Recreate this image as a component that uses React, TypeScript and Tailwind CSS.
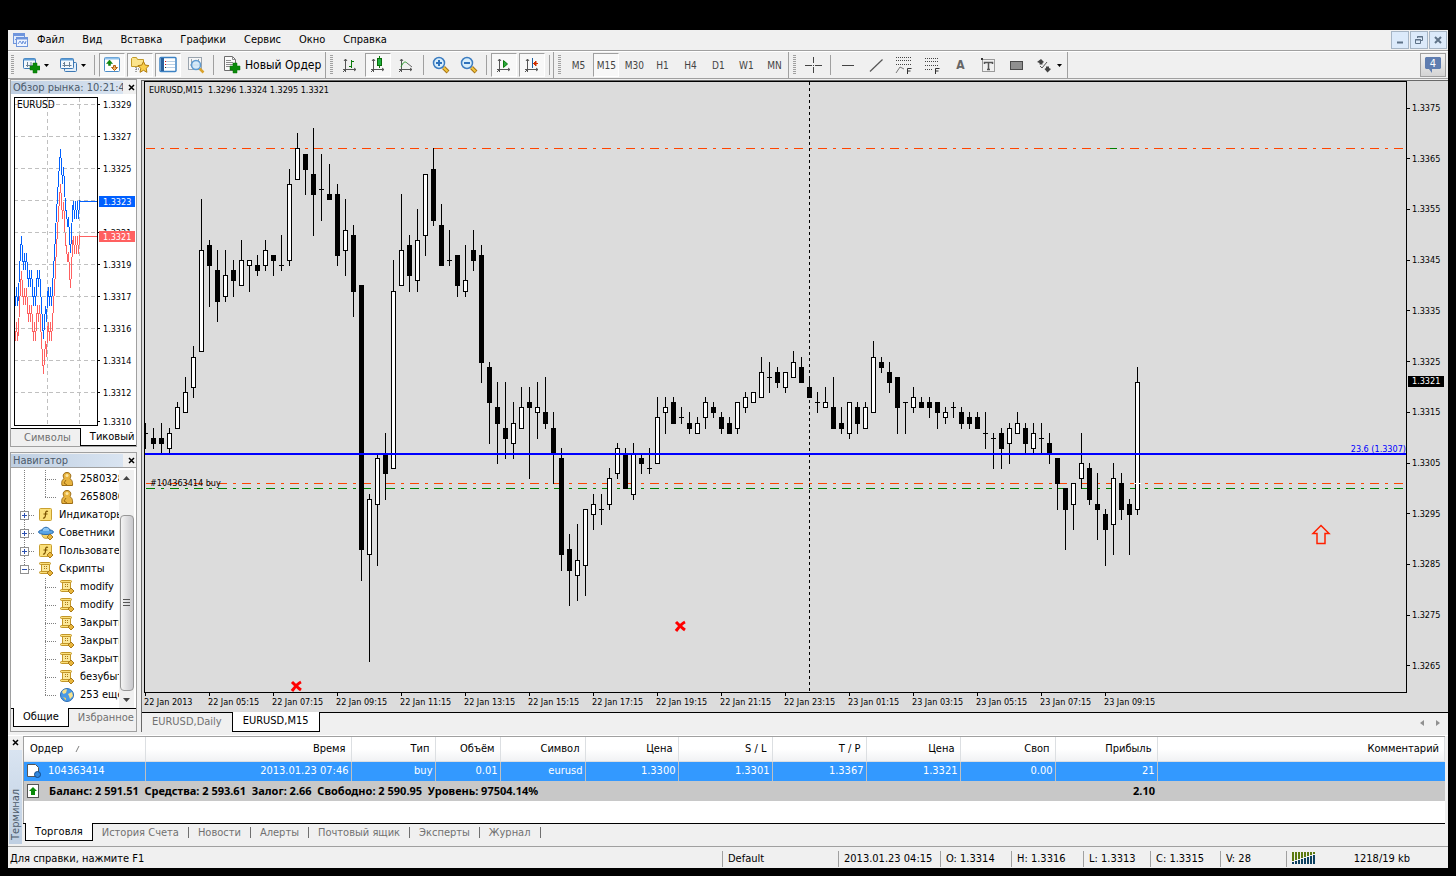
import type { ReactNode } from "react";
import { clsx } from "clsx";

type Candle = [open: number, high: number, low: number, close: number];

// M15 bars, in points above 1.3200
const CANDLES: Candle[] = [
  [111, 113, 108, 111], [110, 112, 108, 109], [110, 113, 107, 109], [108, 112, 107, 111],
  [112, 117, 112, 116], [115, 122, 115, 119], [120, 128, 118, 126], [127, 157, 127, 147],
  [148, 149, 136, 144], [143, 147, 133, 137], [138, 147, 137, 142], [143, 145, 138, 141],
  [140, 149, 140, 145], [144, 145, 139, 145], [144, 146, 142, 143], [144, 149, 143, 147],
  [146, 146, 142, 145], [144, 150, 143, 144], [145, 163, 144, 160], [161, 170, 161, 167],
  [166, 166, 158, 163], [162, 171, 150, 158], [159, 166, 153, 159], [158, 164, 157, 157],
  [158, 160, 144, 146], [147, 157, 142, 151], [150, 152, 134, 139], [140, 140, 82, 88],
  [87, 99, 66, 98], [97, 107, 85, 106], [107, 111, 98, 103], [104, 145, 104, 139],
  [140, 158, 140, 147], [148, 150, 139, 142], [141, 155, 139, 149], [150, 162, 146, 162],
  [163, 167, 152, 153], [152, 156, 144, 144], [145, 151, 144, 145], [146, 146, 138, 140],
  [139, 148, 138, 141], [147, 151, 143, 145], [146, 148, 121, 125], [124, 125, 109, 117],
  [116, 121, 105, 113], [112, 121, 106, 110], [109, 117, 106, 113], [112, 120, 112, 116],
  [117, 120, 102, 116], [115, 121, 110, 116], [115, 122, 112, 113], [112, 115, 101, 107],
  [106, 108, 84, 87], [88, 91, 77, 84], [83, 93, 78, 86], [85, 96, 79, 96],
  [95, 99, 92, 97], [96, 99, 93, 96], [97, 104, 96, 102], [103, 109, 102, 108],
  [107, 108, 100, 100], [99, 109, 98, 107], [106, 107, 103, 105], [104, 108, 103, 104],
  [105, 118, 105, 114], [115, 118, 111, 116], [117, 118, 113, 113], [114, 116, 113, 114],
  [113, 115, 111, 112], [111, 114, 111, 113], [114, 118, 112, 117], [116, 117, 114, 115],
  [114, 115, 111, 112], [113, 114, 111, 111], [112, 117, 111, 117], [116, 119, 115, 118],
  [117, 119, 117, 119], [118, 126, 118, 123], [122, 125, 119, 122], [123, 124, 120, 121],
  [120, 123, 119, 123], [122, 127, 122, 125], [124, 126, 121, 121], [120, 122, 118, 118],
  [117, 119, 115, 117], [116, 120, 116, 117], [116, 122, 112, 112], [113, 116, 111, 112],
  [111, 117, 110, 117], [116, 117, 111, 113], [112, 117, 112, 116], [115, 129, 115, 126],
  [125, 126, 123, 124], [123, 125, 119, 121], [122, 122, 111, 116], [117, 117, 111, 117],
  [116, 120, 115, 118], [117, 118, 116, 116], [117, 118, 114, 116], [117, 117, 112, 115],
  [114, 116, 113, 115], [116, 117, 114, 116], [115, 116, 112, 113], [114, 115, 112, 113],
  [114, 115, 112, 112], [111, 115, 108, 111], [110, 111, 104, 110], [111, 112, 104, 108],
  [109, 113, 105, 112], [111, 115, 111, 113], [112, 113, 107, 109], [108, 113, 107, 111],
  [110, 113, 107, 110], [109, 111, 105, 107], [106, 106, 96, 101], [100, 100, 88, 96],
  [97, 101, 92, 101], [102, 111, 100, 105], [104, 105, 97, 98], [97, 103, 90, 96],
  [95, 96, 85, 92], [93, 105, 87, 102], [101, 103, 94, 96], [97, 98, 87, 95],
  [96, 124, 95, 121],
];

const PRICES = [
  "1.3375", "1.3365", "1.3355", "1.3345", "1.3335", "1.3325",
  "1.3315", "1.3305", "1.3295", "1.3285", "1.3275", "1.3265",
];

const TIMES = [
  "22 Jan 2013", "22 Jan 05:15", "22 Jan 07:15", "22 Jan 09:15", "22 Jan 11:15", "22 Jan 13:15",
  "22 Jan 15:15", "22 Jan 17:15", "22 Jan 19:15", "22 Jan 21:15", "22 Jan 23:15", "23 Jan 01:15",
  "23 Jan 03:15", "23 Jan 05:15", "23 Jan 07:15", "23 Jan 09:15",
];

// ask line, one value per pixel column
const TICKS = [
  133, 114, 133, 123, 97, 80, 63, 80, 97, 80, 97, 80, 97, 114, 97, 114, 97, 114, 133, 114, 133, 114,
  97, 114, 97, 114, 133, 149, 166, 149, 133, 149, 123, 114, 133, 114, 133, 114, 97, 80, 63, 37, 26, 3,
  -7, -24, -7, 11, -6, 11, 37, 37, 54, 44, 63, 80, 63, 37, 28, 46, 28, 46, 28, 46, 28,
];

const TICK_LABELS: [number, string][] = [
  [7, "1.3329"], [39, "1.3327"], [71, "1.3325"], [135, "1.3321"], [167, "1.3319"],
  [199, "1.3317"], [231, "1.3316"], [263, "1.3314"], [295, "1.3312"], [324, "1.3310"],
];

const priceY = (point: number) => Math.round(25.86 + 5.075 * (175 - point));

/* ---------- icons ---------- */

function Icon({ children, size = 18 }: { children: ReactNode; size?: number }) {
  return (
    <svg width={size} height={size} viewBox={`0 0 ${size} ${size}`} fill="none" className="shrink-0" aria-hidden="true">
      {children}
    </svg>
  );
}

function Caret() {
  return (
    <svg width="5" height="3" viewBox="0 0 5 3" className="shrink-0" aria-hidden="true">
      <path d="M0 0h5L2.5 3z" fill="#000" />
    </svg>
  );
}

const GreenPlus = ({ x, y }: { x: number; y: number }) => (
  <path d={`M${x + 3} ${y}h4v3h3v4h-3v3h-4v-3h-3v-4h3z`} fill="#0a8a0a" stroke="#067006" strokeWidth="0.5" />
);

const AppIcon = () => (
  <Icon size={16}>
    <rect x="1.5" y="1.5" width="11" height="10" fill="#dfeafc" stroke="#6f95dc" />
    <path d="M1 3h12" stroke="#6f95dc" strokeWidth="2" />
    <path d="M3 8l2-2 1 2 2-3" stroke="#6f95dc" />
    <rect x="4.5" y="5.5" width="11" height="9" fill="#eff5ff" stroke="#6f95dc" />
    <path d="M4 6.5h12" stroke="#6f95dc" strokeWidth="2" />
    <path d="M6 12l2-3 2 3 1-3 2 3 1-3" stroke="#6f95dc" />
  </Icon>
);

const NewChartIcon = () => (
  <Icon>
    <rect x="1.5" y="2.5" width="12" height="10" rx="1" fill="#f2f8fd" stroke="#3c78b4" />
    <path d="M2 3.5h11" stroke="#5f9fd8" strokeWidth="2" />
    <path d="M4 9.5h7M5.5 6v5M9 6v4" stroke="#6c8296" />
    <GreenPlus x={8} y={7} />
  </Icon>
);

const ProfilesIcon = () => (
  <Icon>
    <rect x="5.5" y="6.5" width="12" height="9" rx="1" fill="#e3eef8" stroke="#3c78b4" />
    <rect x="1.5" y="2.5" width="13" height="10" rx="1" fill="#f2f8fd" stroke="#3c78b4" />
    <path d="M2 3.5h12" stroke="#5f9fd8" strokeWidth="2" />
    <path d="M3.5 9.5h9M5.5 6v5M4 7.5h2M10.5 6v5" stroke="#6c8296" />
  </Icon>
);

const MarketWatchIcon = () => (
  <Icon>
    <rect x="1.5" y="1.5" width="15" height="14" rx="1" fill="#fff" stroke="#4a8cc8" />
    <path d="M2 2.5h14" stroke="#8fc0ea" strokeWidth="2" />
    <path d="M6.5 4L3.5 7.500H5.500v2h2v-2h2z" fill="#0a8a0a" stroke="#067006" strokeWidth="0.5" />
    <path d="M11.500 14.500l-3-3h2v-2h2v2h2z" fill="#f0b060" stroke="#b06010" />
  </Icon>
);

const FavoritesIcon = () => (
  <Icon>
    <path d="M.5 10.5v-8l1-1h4l1 2h6v7z" fill="#fbe48c" stroke="#c29a28" />
    <path d="M5 11v5M5 13h3" stroke="#555" strokeDasharray="1 1" />
    <path d="M12.5 5.5l1.700 3.600 3.800.5-2.800 2.700.7 4-3.400-2-3.500 2 .7-4-2.700-2.700 3.800-.5z" fill="#f9cf4a" stroke="#b07c10" />
  </Icon>
);

const TerminalIcon = () => (
  <Icon>
    <rect x="1" y="1.5" width="16" height="14" rx="1" fill="#fff" stroke="#3c82c4" strokeWidth="1.5" />
    <path d="M3.5 2v13" stroke="#2a5f9c" strokeWidth="3" />
    <path d="M7 5.5h9M7 8.5h9M7 11.5h9" stroke="#b8cfe6" />
    <path d="M6 5.5h1M6 8.5h1" stroke="#e01010" />
    <path d="M6 11.5h1" stroke="#333" />
  </Icon>
);

const TesterIcon = () => (
  <Icon>
    <rect x="1.5" y="1.5" width="13" height="12" fill="#f6f6f6" stroke="#9aa4ae" />
    <path d="M4.5 3v8M3 9h10M11.5 3v4" stroke="#9aa4ae" />
    <path d="M12.5 12.5l4 4" stroke="#d9a22c" strokeWidth="2.5" />
    <circle cx="9" cy="9" r="4.5" fill="#cfe6f8" fillOpacity=".85" stroke="#5d9ad0" strokeWidth="1.5" />
  </Icon>
);

const OrderIcon = () => (
  <Icon>
    <path d="M1.5.5h8l3 3v11h-11z" fill="#fafafa" stroke="#6d6d6d" />
    <path d="M9.5.5v3h3M3 4.5h5M3 6.5h7M3 8.5h7M3 10.5h4" stroke="#8a8a8a" />
    <GreenPlus x={7} y={7} />
  </Icon>
);

const Axes = () => <path d="M4.5 3v13M2 13.5h13M3 5l1.5-2L6 5M13 12l2 1.5-2 1.5M2 16l2-2" stroke="#555" />;

const BarChartIcon = () => (
  <Icon>
    <Axes />
    <path d="M10.5 4v8M8 10.5h2M11 5.5h2" stroke="#0a7a0a" />
  </Icon>
);

const CandleChartIcon = () => (
  <Icon>
    <Axes />
    <path d="M10.5 0v12" stroke="#0a7a0a" />
    <rect x="8.5" y="2.5" width="4" height="7" fill="#1fae3c" stroke="#0a6a0a" />
  </Icon>
);

const LineChartIcon = () => (
  <Icon>
    <Axes />
    <path d="M4 11c2-5 4-6 6-4" stroke="#2e9a2e" />
    <path d="M10 7l5 4" stroke="#666" />
  </Icon>
);

const ZoomIcon = ({ plus }: { plus?: boolean }) => (
  <Icon>
    <path d="M11.5 11.5l4.500 4.500" stroke="#a87414" strokeWidth="4" />
    <path d="M11.5 11.5l4 4" stroke="#f2c640" strokeWidth="2" />
    <circle cx="7" cy="7" r="5.5" fill="#d8eefb" stroke="#3c7cc0" strokeWidth="1.5" />
    <path d={plus ? "M4 7h6M7 4v6" : "M4 7h6"} stroke="#2f72bc" strokeWidth="2" />
  </Icon>
);

const AutoScrollIcon = () => (
  <Icon>
    <Axes />
    <path d="M8.5 4.5v7l4-3.5z" fill="#27a83c" stroke="#0a7a0a" />
  </Icon>
);

const ChartShiftIcon = () => (
  <Icon>
    <Axes />
    <path d="M9.5 2v10" stroke="#2060a0" />
    <path d="M10 7.5h5M13 5l-2.5 2.5L13 10z" fill="#d03000" stroke="#d03000" />
  </Icon>
);

const CrosshairIcon = () => (
  <Icon>
    <path d="M9.5 1v6M9.5 11v6M1 9.5h7M11 9.5h7M9 9.5h1" stroke="#444" />
  </Icon>
);

const HorizontalLineIcon = () => (
  <Icon>
    <path d="M3 9.5h12" stroke="#444" />
  </Icon>
);

const TrendLineIcon = () => (
  <Icon>
    <path d="M3 15.5L15.5 3.5" stroke="#555" strokeWidth="1.2" />
  </Icon>
);

const ChannelIcon = () => (
  <Icon>
    <path d="M1 1.5h16M1 4.5h16M1 8.5h16" stroke="#444" strokeDasharray="1 1" />
    <path d="M1 17l4-6 4 2" stroke="#777" />
    <path d="M12.5 18v-5.5h4M12.5 15h3" stroke="#333" />
  </Icon>
);

const FiboIcon = () => (
  <Icon>
    <path d="M2 2.5h14M2 5.5h14M2 9.5h14M2 13.5h8" stroke="#444" strokeDasharray="1 1" />
    <path d="M12.5 18v-5.5h4M12.5 15h3" stroke="#333" />
  </Icon>
);

const LabelIcon = () => (
  <Icon>
    <rect x="3.5" y="3.5" width="12" height="12" stroke="#444" strokeDasharray="1 1" />
    <path d="M5.5 8V6.5h8V8M9.5 7v6.500M8 13.5h3" stroke="#555" strokeWidth="1.5" />
    <rect x="2" y="2" width="2" height="2" fill="#333" />
  </Icon>
);

const RectangleIcon = () => (
  <Icon>
    <rect x="3.5" y="5.5" width="12" height="8" fill="#8f8f8f" stroke="#4a4a4a" />
  </Icon>
);

const ArrowsIcon = () => (
  <Icon>
    <path d="M2 6l4-3 3 3-1.500 1v1.500h-3V7zM16 13l-3.500 3.500-3-3.500 1.500-1v-1.500h3V12z" fill="#444" />
    <path d="M5 10l2 2 5-6" stroke="#555" />
  </Icon>
);

const AccountIcon = () => (
  <Icon size={16}>
    <path d="M3 14.5c-1-5 1-6 2-7C3 4 5 1.5 8 1.5S13 4 11 7.5c1 1 3 2 2.500 7z" fill="#e8b440" stroke="#9c6c14" />
    <path d="M7 9l-2 3 3 2" stroke="#9c6c14" />
    <circle cx="8" cy="4.5" r="1.5" fill="#fbe7a4" />
  </Icon>
);

const Diamond = () => <path d="M12 9l3 3-3 3-3-3z" fill="#e9b63c" stroke="#a8791a" />;

const IndicatorIcon = ({ custom }: { custom?: boolean }) => (
  <Icon size={16}>
    <rect x="1.5" y="1.5" width="12" height="12" rx="1" fill="#fbe07a" stroke="#c9a030" />
    <path d="M10 4.5c-2-1-2.500.5-2.500 3S6.500 11.5 5 11M5.5 7h4" stroke="#7a5200" strokeWidth="1.2" />
    {custom && <Diamond />}
  </Icon>
);

const ExpertIcon = () => (
  <Icon size={16}>
    <path d="M4 9c0 4 3 5 6 4l2-4z" fill="#f6d468" stroke="#c09a30" />
    <ellipse cx="8" cy="7" rx="7.5" ry="2.5" fill="#5aa4e4" stroke="#2a6cb0" />
    <path d="M4 6c0-5 8-5 8 0" fill="#8cc6f4" stroke="#2a6cb0" />
    <Diamond />
  </Icon>
);

const ScriptIcon = () => (
  <Icon size={16}>
    <path d="M3.500 3.500h8v7h-8z" fill="#fbe89a" stroke="#c39628" />
    <rect x="1.5" y="1.5" width="11" height="2" rx="1" fill="#fbe07a" stroke="#c39628" />
    <rect x="1.5" y="10.500" width="11" height="2" rx="1" fill="#fbe07a" stroke="#c39628" />
    <path d="M6 5.5h3M6 7.5h3" stroke="#a8791a" strokeDasharray="1 1" />
    <Diamond />
  </Icon>
);

const GlobeIcon = () => (
  <Icon size={16}>
    <circle cx="8" cy="8" r="6.5" fill="#4a9ae6" stroke="#2a6cb4" />
    <path d="M3 5c1-2 3-3 5-2.500L7 6 4.500 7zM9 7l4-2 1 4-3 3-1-3z" fill="#f8e28c" />
    <path d="M4 10l3 1v2.500z" fill="#f0d060" />
  </Icon>
);

/* ---------- chrome ---------- */

const MENU = ["Файл", "Вид", "Вставка", "Графики", "Сервис", "Окно", "Справка"];

function MenuBar() {
  return (
    <header className="flex h-[21px] items-center border-b border-[#a0a0a0] bg-[#f0f0f0] pl-1">
      <AppIcon />
      <nav className="flex flex-1">
        {MENU.map((item) => (
          <button key={item} type="button" className="px-[9px] text-[11px] leading-5">
            {item}
          </button>
        ))}
      </nav>
      <div className="flex gap-px pr-px">
        {["Свернуть", "Восстановить", "Закрыть"].map((label, i) => (
          <button
            key={label}
            type="button"
            aria-label={label}
            className="grid h-[18px] w-[18px] place-items-center border border-[#a6b5c5] bg-[#dceafa]"
          >
            <svg width="10" height="10" viewBox="0 0 10 10" fill="none" stroke="#5f7388" aria-hidden="true">
              {i === 0 && <path d="M2 7.500h6" strokeWidth="2" />}
              {i === 1 && <path d="M3.500 3V1.500h5v4H7M3 2h6M1.500 4.500h5v4h-5zM1 5h6" />}
              {i === 2 && <path d="M2 2l6 6M8 2L2 8" strokeWidth="2" />}
            </svg>
          </button>
        ))}
      </div>
    </header>
  );
}

function ToolButton({ label, pressed, children }: { label: string; pressed?: boolean; children: ReactNode }) {
  return (
    <button
      type="button"
      aria-label={label}
      aria-pressed={pressed}
      className={clsx(
        "mx-px grid h-6 w-[26px] shrink-0 place-items-center border text-[10px] text-[#444]",
        pressed ? "border-t-[#a0a0a0] border-r-white border-b-white border-l-[#a0a0a0] bg-[#f8f8f8]" : "border-transparent",
      )}
    >
      {children}
    </button>
  );
}

function DropButton({ label, children }: { label: string; children: ReactNode }) {
  return (
    <button type="button" aria-label={label} className="flex w-[37px] shrink-0 items-center justify-center gap-1">
      {children}
      <Caret />
    </button>
  );
}

const Divider = () => <span className="mx-[3px] h-5 w-px shrink-0 bg-[#a0a0a0]" />;

function ToolGroup({ children }: { children: ReactNode }) {
  return (
    <div className="flex h-[26px] items-center border-r border-[#a0a0a0] pl-[3px]">
      <span className="mr-[3px] h-5 w-[3px] bg-[repeating-linear-gradient(#a0a0a0_0_1px,#f0f0f0_1px_2px)]" />
      {children}
    </div>
  );
}

const PERIODS = ["M5", "M15", "M30", "H1", "H4", "D1", "W1", "MN"];

function Toolbar() {
  return (
    <div className="flex h-7 items-center gap-px border-t border-b border-t-white border-b-[#a0a0a0] bg-[#f0f0f0]">
      <ToolGroup>
        <DropButton label="Новый график"><NewChartIcon /></DropButton>
        <DropButton label="Профили"><ProfilesIcon /></DropButton>
        <Divider />
        <ToolButton label="Обзор рынка" pressed><MarketWatchIcon /></ToolButton>
        <ToolButton label="Навигатор" pressed><FavoritesIcon /></ToolButton>
        <ToolButton label="Терминал" pressed><TerminalIcon /></ToolButton>
        <ToolButton label="Тестер стратегий"><TesterIcon /></ToolButton>
        <Divider />
        <button type="button" className="ml-[6px] flex items-center gap-1 pr-1 text-xs whitespace-nowrap">
          <OrderIcon />
          Новый Ордер
        </button>
      </ToolGroup>
      <ToolGroup>
        <ToolButton label="Бары"><BarChartIcon /></ToolButton>
        <ToolButton label="Японские свечи" pressed><CandleChartIcon /></ToolButton>
        <ToolButton label="Линия"><LineChartIcon /></ToolButton>
        <Divider />
        <ToolButton label="Увеличить"><ZoomIcon plus /></ToolButton>
        <ToolButton label="Уменьшить"><ZoomIcon /></ToolButton>
        <Divider />
        <ToolButton label="Автопрокрутка" pressed><AutoScrollIcon /></ToolButton>
        <ToolButton label="Сдвиг графика" pressed><ChartShiftIcon /></ToolButton>
        <Divider />
      </ToolGroup>
      <ToolGroup>
        {PERIODS.map((period) => (
          <ToolButton key={period} label={period} pressed={period === "M15"}>{period}</ToolButton>
        ))}
      </ToolGroup>
      <ToolGroup>
        <ToolButton label="Перекрестие"><CrosshairIcon /></ToolButton>
        <Divider />
        <ToolButton label="Горизонтальная линия"><HorizontalLineIcon /></ToolButton>
        <ToolButton label="Трендовая линия"><TrendLineIcon /></ToolButton>
        <ToolButton label="Канал Фибоначчи"><ChannelIcon /></ToolButton>
        <ToolButton label="Линии Фибоначчи"><FiboIcon /></ToolButton>
        <ToolButton label="Текст"><span className="text-xs font-bold text-[#666]">A</span></ToolButton>
        <ToolButton label="Метка"><LabelIcon /></ToolButton>
        <ToolButton label="Прямоугольник"><RectangleIcon /></ToolButton>
        <DropButton label="Стрелки"><ArrowsIcon /></DropButton>
      </ToolGroup>
      <button
        type="button"
        aria-label="Сообщения"
        className="relative mr-[2px] ml-auto grid h-6 w-[26px] place-items-center border border-[#a0a0a0] bg-linear-to-b from-[#f4f4f4] to-[#d4d4d4]"
      >
        <svg width="16" height="16" viewBox="0 0 16 16" aria-hidden="true">
          <path d="M1 0h14l1 1v10l-1 1H7v4l-3-4H1l-1-1V1z" fill="#5f7db0" />
        </svg>
        <span className="absolute inset-x-0 top-1 text-[11px] leading-3 text-white">4</span>
      </button>
    </div>
  );
}

/* ---------- docked panels ---------- */

function CloseGlyph() {
  return (
    <svg width="7" height="7" viewBox="0 0 7 7" aria-hidden="true">
      <path d="M1 1l5 5M6 1L1 6" stroke="#000" strokeWidth="1.500" />
    </svg>
  );
}

function PanelTitle({ children }: { children: ReactNode }) {
  return (
    <div className="flex h-[14px] items-center bg-[#f0f0f0]">
      <h2 className="h-[13px] w-28 overflow-hidden bg-linear-to-r from-[#bfcfe2] to-[#d9e4f1] pl-[2px] text-[11px] leading-[13px] whitespace-nowrap text-[#4c5a6a]">
        {children}
      </h2>
      <button type="button" aria-label="Закрыть панель" className="ml-[5px]">
        <CloseGlyph />
      </button>
    </div>
  );
}

function TickChart() {
  const line = (shift: number) => TICKS.map((y, i) => `${i + 2}.5,${y + 76 + shift}`).join(" ");
  return (
    <svg width="122" height="330" className="block shrink-0 text-[9px]" shapeRendering="crispEdges" fill="none">
      <path
        d="M34.500 1v328M66.500 1v328M1 7.500h83M1 39.500h83M1 71.500h83M1 103.500h83M1 135.500h83M1 167.500h83M1 199.500h83M1 231.500h83M1 263.500h83M1 295.500h83"
        stroke="#c0c0c0"
        strokeDasharray="4 3"
      />
      <polyline points={`${line(35)} 84,139.500`} stroke="#ff6060" />
      <polyline points={`${line(0)} 84,104.500`} stroke="#0060ff" />
      <rect x="1.5" y=".5" width="83" height="328" stroke="#000" />
      <text x="4" y="11" fill="#000" fontSize="10">EURUSD</text>
      {TICK_LABELS.map(([y, text]) => (
        <g key={text}>
          <path d={`M85 ${y}.5h2`} stroke="#000" />
          <text x="90" y={y + 4} fill="#000">{text}</text>
        </g>
      ))}
      <rect x="86" y="99" width="36" height="11" fill="#0060ff" />
      <text x="90" y="108" fill="#fff">1.3323</text>
      <rect x="86" y="134" width="36" height="11" fill="#ff6060" />
      <text x="90" y="143" fill="#fff">1.3321</text>
    </svg>
  );
}

function DockTab({ active, children }: { active?: boolean; children: ReactNode }) {
  return (
    <button
      type="button"
      className={clsx(
        "shrink-0 border-black px-[9px] pt-px text-[11px] whitespace-nowrap",
        active ? "border-x border-b bg-white" : "border-t text-[#707070]",
      )}
    >
      {children}
    </button>
  );
}

function MarketWatch() {
  return (
    <section className="border border-[#a0a0a0] bg-white">
      <PanelTitle>Обзор рынка: 10:21:41</PanelTitle>
      <div className="flex pt-[3px] pl-[2px]">
        <TickChart />
      </div>
      <div className="mt-px flex h-[18px] overflow-hidden bg-[#f0f0f0]">
        <span className="w-1 shrink-0 border-t border-black" />
        <DockTab>Символы</DockTab>
        <DockTab active>Тиковый график</DockTab>
      </div>
    </section>
  );
}

type TreeRow = { label: string; icon: ReactNode; level: 1 | 2; open?: boolean; last?: boolean };

const TREE: TreeRow[] = [
  { label: "25803283", icon: <AccountIcon />, level: 2 },
  { label: "26580864", icon: <AccountIcon />, level: 2, last: true },
  { label: "Индикаторы", icon: <IndicatorIcon />, level: 1 },
  { label: "Советники", icon: <ExpertIcon />, level: 1 },
  { label: "Пользовательские", icon: <IndicatorIcon custom />, level: 1 },
  { label: "Скрипты", icon: <ScriptIcon />, level: 1, open: true },
  { label: "modify", icon: <ScriptIcon />, level: 2 },
  { label: "modify", icon: <ScriptIcon />, level: 2 },
  { label: "Закрытие", icon: <ScriptIcon />, level: 2 },
  { label: "Закрытие", icon: <ScriptIcon />, level: 2 },
  { label: "Закрытие", icon: <ScriptIcon />, level: 2 },
  { label: "безубыток", icon: <ScriptIcon />, level: 2 },
  { label: "253 ещё", icon: <GlobeIcon />, level: 2, last: true },
];

function TreeLines({ row, trunk }: { row: TreeRow; trunk: boolean }) {
  const dots = { stroke: "#808080", strokeDasharray: "1 1" };
  if (row.level === 2) {
    return (
      <svg width="47" height="18" className="shrink-0" shapeRendering="crispEdges" aria-hidden="true">
        {trunk && <path d="M13.500 0v18" {...dots} />}
        <path d={row.last ? "M34.500 0v9" : "M34.500 0v18"} {...dots} />
        <path d="M34 9.500h12" {...dots} />
      </svg>
    );
  }
  return (
    <svg width="26" height="18" className="shrink-0" shapeRendering="crispEdges" aria-hidden="true">
      <path d={row.open ? "M13.500 0v9" : "M13.500 0v18"} {...dots} />
      <path d="M18 9.500h6" {...dots} />
      <rect x="9.5" y="5.5" width="8" height="8" fill="#fff" stroke="#919191" />
      <path d={row.open ? "M11 9.500h5" : "M11 9.500h5M13.500 7v5"} stroke="#2b4fb0" />
    </svg>
  );
}

function Navigator() {
  return (
    <section className="mt-[5px] flex flex-1 flex-col border border-[#a0a0a0] bg-white">
      <PanelTitle>Навигатор</PanelTitle>
      <div className="flex flex-1 border-t border-[#a0a0a0] pt-[2px]">
        <ul className="w-[108px] overflow-hidden text-[11px] leading-[18px]">
          {TREE.map((row, i) => (
            <li key={i} className="flex h-[18px] items-center gap-[5px] whitespace-nowrap">
              <span className="flex items-center gap-px">
                <TreeLines row={row} trunk={i < 2} />
                {row.icon}
              </span>
              {row.label}
            </li>
          ))}
        </ul>
        <div className="flex w-[15px] flex-col items-center justify-between bg-[#f0f0f0] pt-[6px]">
          <svg width="7" height="4" aria-hidden="true"><path d="M0 4h7L3.500 0z" fill="#444" /></svg>
          <span className="mt-auto grid h-44 w-[14px] place-items-center rounded-sm border border-[#979797] bg-linear-to-r from-[#f4f4f4] to-[#c8c8cc]">
            <svg width="7" height="8" aria-hidden="true"><path d="M0 .5h7M0 3.500h7M0 6.500h7" stroke="#555" /></svg>
          </span>
          <svg width="7" height="17" aria-hidden="true"><path d="M0 7h7L3.500 11z" fill="#444" /></svg>
        </div>
      </div>
      <div className="flex h-[19px] overflow-hidden bg-[#f0f0f0]">
        <span className="w-[2px] shrink-0 border-t border-black" />
        <DockTab active>Общие</DockTab>
        <DockTab>Избранное</DockTab>
      </div>
      <div className="h-1 bg-[#f0f0f0]" />
    </section>
  );
}

/* ---------- chart ---------- */

function Candles() {
  return (
    <>
      {CANDLES.map(([open, high, low, close], i) => {
        const x = i * 8;
        const top = priceY(Math.max(open, close));
        const bottom = priceY(Math.min(open, close));
        const up = close > open;
        return (
          <g key={i}>
            <rect x={x} y={priceY(high)} width="1" height={priceY(low) - priceY(high) + 1} fill="#000" />
            <rect x={x - 2} y={top} width="5" height={bottom - top + 1} fill="#000" />
            {up && <rect x={x - 1} y={top + 1} width="3" height={bottom - top - 1} fill="#fff" />}
          </g>
        );
      })}
    </>
  );
}

const Cross = ({ x, y }: { x: number; y: number }) => (
  <path d={`M${x + 1} ${y}c3 3 6 6 9 8M${x + 10} ${y}c-4 2-6 5-9 9`} fill="none" stroke="#f00" strokeWidth="3" />
);

function Plot() {
  return (
    <svg width="100%" height="610" className="block text-[9px]" role="img" aria-label="EURUSD,M15">
      <g shapeRendering="crispEdges" fill="none">
        <line x1="1" x2="100%" y1="66.5" y2="66.5" stroke="#ff4500" strokeDasharray="9 6 3 6" />
        <line x1="965" x2="972" y1="66.5" y2="66.5" stroke="#008000" />
        <line x1="1" x2="100%" y1="401.5" y2="401.5" stroke="#ff4500" strokeDasharray="9 6 3 6" />
        <line x1="1" x2="100%" y1="406.5" y2="406.5" stroke="#008000" strokeDasharray="9 6 3 6" />
        <line x1="664.5" x2="664.5" y1="0" y2="100%" stroke="#000" strokeDasharray="3 3" />
        <Candles />
        <path d="M989 401.5h7" stroke="#fff" />
        <line x1="0" x2="100%" y1="372" y2="372" stroke="#00f" strokeWidth="2" />
      </g>
      <text x="5" y="404">#104363414 buy</text>
      <text x="100%" y="370" textAnchor="end" fill="#00f">23.6 (1.3307)</text>
      <Cross x={146} y={600} />
      <Cross x={530} y={540} />
      <path d="M1176 443.5l8 8h-4v10h-8v-10h-4z" fill="none" stroke="#ff2000" strokeWidth="1.5" />
    </svg>
  );
}

function ChartWindow() {
  return (
    <div className="flex min-w-0 flex-1 flex-col border-t border-l border-[#696969] bg-[#dcdcdc] pl-[2px]">
      <div className="flex">
        <div className="relative min-w-0 flex-1 border border-black">
          <p className="absolute top-[2px] left-1 text-[9px] leading-3 whitespace-pre">
            EURUSD,M15{"  "}1.3296 1.3324 1.3295 1.3321
          </p>
          <Plot />
        </div>
        <div className="relative w-[41px]">
          <ul className="flex h-full flex-col justify-between py-[21px] text-[9px] leading-3">
            {PRICES.map((price) => (
              <li key={price} className="flex items-center gap-[2px]">
                <span className="h-px w-[3px] bg-black" />
                {price}
              </li>
            ))}
          </ul>
          <span className="absolute top-[295px] left-px w-9 bg-black pl-1 text-[9px] leading-[11px] text-white">1.3321</span>
        </div>
      </div>
      <ol className="flex h-[19px] overflow-hidden text-[9px] leading-3">
        {TIMES.map((time) => (
          <li key={time} className="w-16 shrink-0 whitespace-nowrap">
            <span className="ml-px block h-[3px] w-px bg-black" />
            {time}
          </li>
        ))}
      </ol>
    </div>
  );
}

function ChartTabs() {
  return (
    <div className="flex h-5 border-l border-[#696969] text-[11px]">
      <button type="button" className="border-t border-black px-[10px] text-[#707070]">EURUSD,Daily</button>
      <button type="button" className="border-x border-b border-black bg-white px-[10px]">EURUSD,M15</button>
      <div className="flex flex-1 items-center justify-end gap-3 border-t border-black pr-2">
        <svg width="4" height="6" aria-hidden="true"><path d="M4 0v6L0 3z" fill="#909090" /></svg>
        <svg width="4" height="6" aria-hidden="true"><path d="M0 0v6l4-3z" fill="#909090" /></svg>
      </div>
    </div>
  );
}

/* ---------- terminal ---------- */

const COLUMNS: [name: string, width: string, value: string][] = [
  ["Ордер", "w-[121px]", "104363414"],
  ["Время", "w-[206px]", "2013.01.23 07:46"],
  ["Тип", "w-[84px]", "buy"],
  ["Объём", "w-[65px]", "0.01"],
  ["Символ", "w-[85px]", "eurusd"],
  ["Цена", "w-[93px]", "1.3300"],
  ["S / L", "w-[94px]", "1.3301"],
  ["T / P", "w-[94px]", "1.3367"],
  ["Цена", "w-[94px]", "1.3321"],
  ["Своп", "w-[95px]", "0.00"],
  ["Прибыль", "w-[102px]", "21"],
  ["Комментарий", "w-auto", ""],
];

const TERMINAL_TABS = ["История Счета", "Новости", "Алерты", "Почтовый ящик", "Эксперты", "Журнал"];

function OrdersTable() {
  return (
    <table className="w-full table-fixed border-collapse text-[11px]">
      <thead>
        <tr className="h-6 bg-linear-to-b from-white from-50% to-[#f1f2f4]">
          {COLUMNS.map(([name, width], i) => (
            <th
              key={i}
              scope="col"
              className={clsx(
                "border-r border-b border-[#dcdfe2] font-normal",
                width,
                i === 0 ? "pl-[6px] text-left" : "pr-[5px] text-right",
              )}
            >
              {name}
              {i === 0 && (
                <svg width="8" height="8" className="ml-3 inline" fill="none" aria-hidden="true">
                  <path d="M1 7l3-6" stroke="#808080" />
                </svg>
              )}
            </th>
          ))}
        </tr>
      </thead>
      <tbody>
        <tr className="h-5 bg-[#3399ff] text-white">
          {COLUMNS.map(([, , value], i) => (
            <td key={i} className={clsx("border-[#c0c0c0] whitespace-nowrap", i < 11 && "border-r", i === 0 ? "pl-[3px]" : "pr-[2px] text-right")}>
              {i === 0 ? (
                <span className="flex items-center gap-[7px]">
                  <Icon size={14}>
                    <path d="M.5.5h8l3 3v9H.5z" fill="#fff" stroke="#555" />
                    <circle cx="10.5" cy="10.5" r="3" fill="#2f86dc" stroke="#124a8a" />
                  </Icon>
                  {value}
                </span>
              ) : (
                value
              )}
            </td>
          ))}
        </tr>
        <tr className="h-5 bg-[#c8c8c8] font-['Noto_Sans',sans-serif] leading-4 font-bold">
          <td colSpan={10} className="pl-[3px]">
            <span className="flex items-center gap-2 whitespace-pre">
              <Icon size={14}>
                <rect x=".5" y=".5" width="11" height="13" fill="#fff" stroke="#555" />
                <path d="M6 3l4 4H8v4H4V7H2z" fill="#0a8a0a" />
              </Icon>
              {"Баланс: 2 591.51  Средства: 2 593.61  Залог: 2.66  Свободно: 2 590.95  Уровень: 97504.14%"}
            </span>
          </td>
          <td className="pr-[2px] text-right">2.10</td>
          <td />
        </tr>
      </tbody>
    </table>
  );
}

function Terminal() {
  return (
    <section className="flex h-[111px] border-t border-white bg-[#f0f0f0] pr-[3px]">
      <div className="flex w-[15px] flex-col items-center">
        <button type="button" aria-label="Закрыть терминал" className="flex h-3 items-center">
          <CloseGlyph />
        </button>
        <h2 className="mt-[2px] h-[94px] w-[13px] rotate-180 bg-linear-to-t from-[#d9e4f1] to-[#bfcfe2] pt-1 text-[11px] leading-[13px] text-[#4c5a6a] [writing-mode:vertical-rl]">
          Терминал
        </h2>
      </div>
      <div className="flex min-w-0 flex-1 flex-col">
        <div className="flex-1 border-t border-l border-[#a0a0a0] bg-white">
          <OrdersTable />
        </div>
        <div className="flex h-[18px] text-[11px]">
          <span className="w-[2px] border-t border-black" />
          <button type="button" className="border-x border-b border-black bg-white px-[9px] pt-px">Торговля</button>
          <div className="flex flex-1 items-center border-t border-black text-[#707070]">
            {TERMINAL_TABS.map((tab) => (
              <button key={tab} type="button" className="border-r border-[#707070] px-[9px] leading-[11px]">
                {tab}
              </button>
            ))}
          </div>
        </div>
        <div className="h-[5px]" />
      </div>
    </section>
  );
}

const STATUS: [string, string][] = [
  ["w-[116px]", "Default"],
  ["w-[102px]", "2013.01.23 04:15"],
  ["w-[71px]", "O: 1.3314"],
  ["w-[72px]", "H: 1.3316"],
  ["w-[67px]", "L: 1.3313"],
  ["w-[70px]", "C: 1.3315"],
  ["w-[66px]", "V: 28"],
];

function StatusBar() {
  return (
    <footer className="flex h-[22px] items-center border-t border-[#a0a0a0] bg-[#f0f0f0] pt-[2px] text-[11px] leading-4 whitespace-nowrap">
      <span className="flex-1 pl-[2px]">Для справки, нажмите F1</span>
      {STATUS.map(([width, text]) => (
        <span key={text} className={clsx("shrink-0 border-l border-[#a0a0a0] pl-[5px]", width)}>
          {text}
        </span>
      ))}
      <span className="flex w-[162px] shrink-0 items-center border-l border-[#a0a0a0] pl-[5px]">
        <svg width="24" height="13" shapeRendering="crispEdges" aria-hidden="true">
          {Array.from({ length: 8 }, (_, i) => (
            <g key={i}>
              <rect x={i * 3} y="0" width="2" height={9 - i} fill="#5c7a10" />
              <rect x={i * 3} y={10 - i} width="2" height={2 + i} fill="#0c4060" />
            </g>
          ))}
        </svg>
        <span className="flex-1 pr-[38px] text-right">1218/19 kb</span>
      </span>
    </footer>
  );
}

export default function App() {
  return (
    <div className="min-h-screen bg-black px-2 pt-[30px] pb-2 font-['DejaVu_Sans_Condensed','DejaVu_Sans','Noto_Sans',sans-serif] text-black">
      <div className="flex flex-col bg-[#f0f0f0]">
        <MenuBar />
        <Toolbar />
        <main className="flex">
          <aside className="flex w-[133px] shrink-0 flex-col pr-1 pl-[2px]">
            <MarketWatch />
            <Navigator />
          </aside>
          <div className="flex min-w-0 flex-1 flex-col pt-px">
            <ChartWindow />
            <ChartTabs />
          </div>
        </main>
        <div className="h-[3px]" />
        <Terminal />
        <StatusBar />
      </div>
    </div>
  );
}
